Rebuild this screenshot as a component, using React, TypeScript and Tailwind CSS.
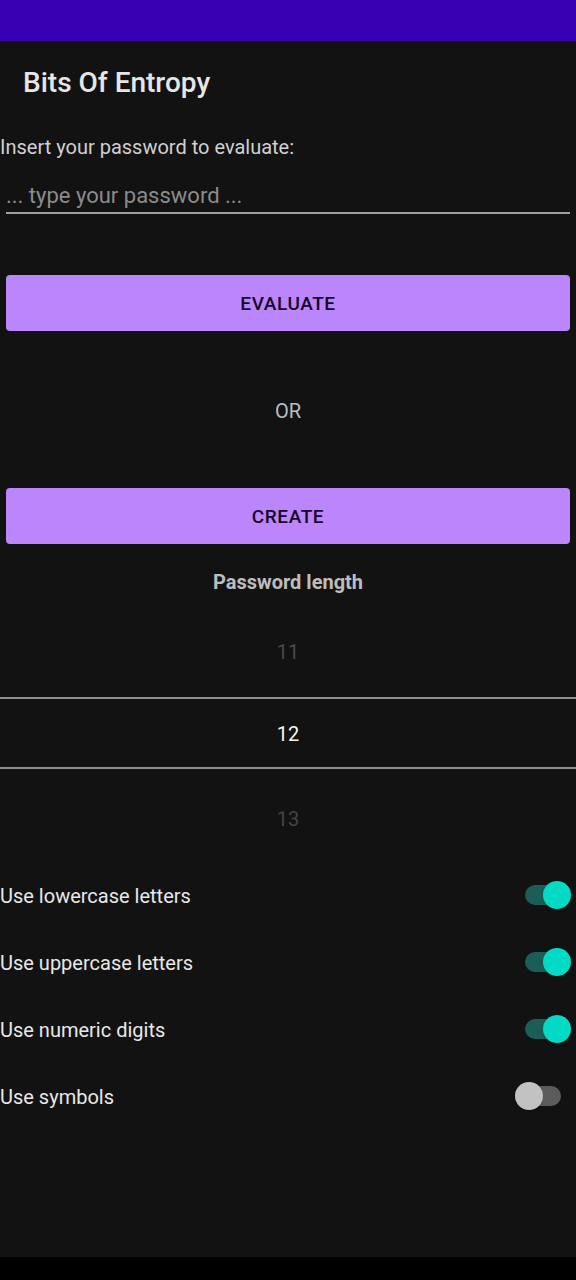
import { useState } from "react";

const OPTIONS = [
  { id: "lower", label: "Use lowercase letters", on: true },
  { id: "upper", label: "Use uppercase letters", on: true },
  { id: "digits", label: "Use numeric digits", on: true },
  { id: "symbols", label: "Use symbols", on: false },
];

function Toggle({ on, onClick }: { on: boolean; onClick: () => void }) {
  return (
    <button onClick={onClick} className="relative w-[56px] h-[28px] mr-[5px] shrink-0">
      <span
        className={`absolute left-[10px] top-[4px] w-[36px] h-[20px] rounded-full ${on ? "bg-[#1b5e57]" : "bg-[#5c5c5c]"}`}
      />
      <span
        className={`absolute top-0 w-[28px] h-[28px] rounded-full shadow ${on ? "left-[28px] bg-[#03dac5]" : "left-0 bg-[#c2c2c2]"}`}
      />
    </button>
  );
}

export default function App() {
  const [opts, setOpts] = useState(OPTIONS);

  return (
    <div className="h-[1280px] flex flex-col bg-[#121212] font-['Roboto',sans-serif]">
      {/* status bar */}
      <div className="h-[41px] bg-[#3700b3] shrink-0" />

      <div className="h-[81px] pt-[2px] flex items-center pl-[23px] text-[28px] font-medium text-[#e6e6e6]">
        Bits Of Entropy
      </div>

      <div className="h-[49px] pt-[1px] flex items-center text-[20px] text-[#d0d0d0]">
        Insert your password to evaluate:
      </div>

      <div className="mx-[6px] h-[43px] pt-[13px] pb-[4px] border-b-2 border-[#9e9e9e]">
        <input
          type="password"
          placeholder="... type your password ..."
          className="w-full bg-transparent outline-none text-[22px] leading-[24px] text-[#e6e6e6] placeholder:text-[#8c8c8c]"
        />
      </div>

      <button className="mt-[61px] mx-[6px] h-[56px] pt-[2px] rounded-[4px] bg-[#bb86fc] text-[19px] font-medium tracking-[0.03em] text-[#150326]">
        EVALUATE
      </button>

      <div className="h-[157px] pt-[2px] flex items-center justify-center text-[20px] text-[#bdbdbd]">OR</div>

      <button className="mx-[6px] h-[56px] pt-[2px] rounded-[4px] bg-[#bb86fc] text-[19px] font-medium tracking-[0.03em] text-[#150326]">
        CREATE
      </button>

      <div className="h-[74px] pt-[2px] flex items-center justify-center text-[20px] font-bold text-[#bdbdbd]">
        Password length
      </div>

      {/* number picker */}
      <div className="h-[79px] pt-[22px] text-center text-[20px] leading-[24px] text-[#4a4a4a]">11</div>
      <div className="h-[2px] bg-[#8e8e8e]" />
      <div className="h-[68px] pt-[2px] flex items-center justify-center text-[20px] text-[#f5f5f5]">12</div>
      <div className="h-[2px] bg-[#8e8e8e]" />
      <div className="h-[92px] pt-[38px] text-center text-[20px] leading-[24px] text-[#454545]">13</div>

      {opts.map((o, i) => (
        <div key={o.id} className="h-[67px] flex items-center justify-between">
          <span className="pt-[2px] text-[20px] text-[#e8e8e8]">{o.label}</span>
          <Toggle
            on={o.on}
            onClick={() => setOpts(opts.map((x, j) => (j === i ? { ...x, on: !x.on } : x)))}
          />
        </div>
      ))}

      <div className="flex-1" />
      {/* nav bar */}
      <div className="h-[23px] bg-black shrink-0" />
    </div>
  );
}
